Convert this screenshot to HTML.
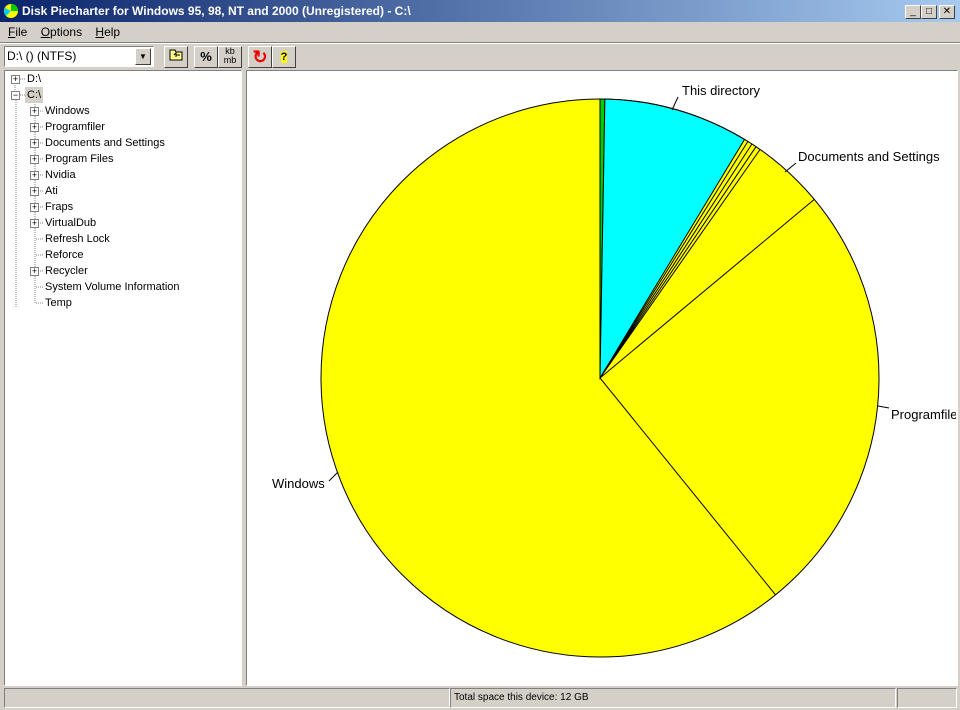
<!DOCTYPE html>
<html><head><style>
body{margin:0;width:960px;height:710px;background:#d4d0c8;font-family:"Liberation Sans",Tahoma,sans-serif;font-size:11px;position:relative;overflow:hidden}
.a{position:absolute}
.title{left:0;top:0;width:960px;height:22px;background:linear-gradient(to right,#0a246a,#a6caf0);color:#fff;font-weight:bold;font-size:12px;line-height:22px}
.wb{top:5px;width:14px;height:12px;background:#d4d0c8;border:1px solid;border-color:#fff #404040 #404040 #fff;font-size:10px;line-height:12px;text-align:center;color:#000}
.menu span{margin-right:10px}
.btn{top:46px;width:22px;height:20px;background:#d4d0c8;border:1px solid;border-color:#fff #404040 #404040 #fff;text-align:center;line-height:20px;font-weight:bold}
.sunk{border:1px solid;border-color:#808080 #fff #fff #808080}
.tree div.t{position:absolute;height:16px;line-height:16px;white-space:nowrap}
.tree div.pm{position:absolute;width:7px;height:7px;border:1px solid #808080;background:#fff;font-size:9px;line-height:7px;text-align:center;overflow:hidden}
</style></head><body>
<div class="a title"><svg class="a" style="left:3px;top:3px" width="16" height="16"><circle cx="8" cy="8" r="7" fill="#ff0"/><path d="M8 8L8 1A7 7 0 0 1 15 8Z" fill="#0c0"/><path d="M8 8L3 13A7 7 0 0 1 2 5Z" fill="#0cf"/></svg><span class="a" style="left:22px">Disk Piecharter for Windows 95, 98, NT and 2000 (Unregistered) - C:\</span></div>
<div class="a wb" style="left:905px">_</div><div class="a wb" style="left:921px">□</div><div class="a wb" style="left:939px;">✕</div>
<div class="a menu" style="left:8px;top:25px;font-size:12px"><span><u>F</u>ile</span> <span><u>O</u>ptions</span> <span><u>H</u>elp</span></div>
<div class="a" style="left:0;top:42px;width:960px;border-top:1px solid #808080;border-bottom:1px solid #fff"></div>
<div class="a sunk" style="left:4px;top:46px;width:146px;height:19px;background:#fff;font-size:12px;line-height:19px;padding-left:2px">D:\ () (NTFS)</div>
<div class="a btn" style="left:135px;top:48px;width:14px;height:15px;line-height:15px;font-size:8px">▼</div>
<div class="a btn" style="left:164px"><svg width="16" height="14"><path d="M2 3h5l1 2h6v8H2z" fill="#ff8" stroke="#000"/><path d="M6 8l2-2v4M8 8h4" stroke="#000" fill="none"/></svg></div>
<div class="a btn" style="left:194px;font-size:13px">%</div>
<div class="a btn" style="left:218px;font-size:9px;line-height:9px;font-weight:normal">kb<br>mb</div>
<div class="a btn" style="left:248px;color:#e00;font-size:18px">↻</div>
<div class="a btn" style="left:272px;color:#000;background:#d4d0c8"><span style="background:#ff0">?</span></div>
<div class="a sunk" style="left:4px;top:70px;width:236px;height:614px;background:#fff"></div>
<div class="a sunk" style="left:246px;top:70px;width:710px;height:614px;background:#fff"></div>
<div class="a tree" style="left:0;top:0">
<svg class="a" style="left:0;top:0" width="240" height="320"><g stroke="#808080" stroke-dasharray="1,1"><path d="M15 79v16M20 79h5M20 95h5M16 100v207M36 111h8M36 127h8M36 143h8M36 159h8M36 175h8M36 191h8M36 207h8M36 223h8M36 239h8M36 255h8M36 271h8M36 287h8M36 303h8"/><path d="M35 100v203"/></g></svg>
<div class="pm" style="left:11px;top:75px">+</div><div class="t" style="left:27px;top:71px">D:\</div>
<div class="pm" style="left:11px;top:91px">−</div><div class="t" style="left:25px;top:87px;background:#d4d0c8;padding:0 2px">C:\</div>
<div class="pm" style="left:30px;top:107px">+</div><div class="t" style="left:45px;top:103px">Windows</div>
<div class="pm" style="left:30px;top:123px">+</div><div class="t" style="left:45px;top:119px">Programfiler</div>
<div class="pm" style="left:30px;top:139px">+</div><div class="t" style="left:45px;top:135px">Documents and Settings</div>
<div class="pm" style="left:30px;top:155px">+</div><div class="t" style="left:45px;top:151px">Program Files</div>
<div class="pm" style="left:30px;top:171px">+</div><div class="t" style="left:45px;top:167px">Nvidia</div>
<div class="pm" style="left:30px;top:187px">+</div><div class="t" style="left:45px;top:183px">Ati</div>
<div class="pm" style="left:30px;top:203px">+</div><div class="t" style="left:45px;top:199px">Fraps</div>
<div class="pm" style="left:30px;top:219px">+</div><div class="t" style="left:45px;top:215px">VirtualDub</div>
<div class="t" style="left:45px;top:231px">Refresh Lock</div>
<div class="t" style="left:45px;top:247px">Reforce</div>
<div class="pm" style="left:30px;top:267px">+</div><div class="t" style="left:45px;top:263px">Recycler</div>
<div class="t" style="left:45px;top:279px">System Volume Information</div>
<div class="t" style="left:45px;top:295px">Temp</div>
</div>
<svg class="a" style="left:0;top:0" width="956" height="686"><g stroke="#000" stroke-width="1">
<circle cx="600" cy="378" r="279" fill="#ff0"/>
<path d="M600 378L600 99A279 279 0 0 1 604.9 99Z" fill="#0c0"/>
<path d="M600 378L604.9 99A279 279 0 0 1 744.5 139.5Z" fill="#0ff"/>
<path d="M600 378L747.9 141.4M600 378L752 143.9M600 378L756 146.7M600 378L760 149.5M600 378L814.3 199.4M600 378L775.5 594.8M600 378V99" fill="none"/>
<path d="M678 97L672 110M796 163L785 172M889 408L878 406M329 481L338 472" fill="none"/></g>
<g font-size="13" font-family="Liberation Sans,sans-serif"><text x="682" y="95">This directory</text><text x="798" y="161">Documents and Settings</text><text x="891" y="419">Programfiler</text><text x="272" y="488">Windows</text></g></svg>
<div class="a sunk" style="left:4px;top:688px;width:444px;height:18px"></div>
<div class="a sunk" style="left:450px;top:688px;height:18px;line-height:18px;padding-left:3px;width:441px;font-size:10px">Total space this device: 12 GB</div>
<div class="a sunk" style="left:897px;top:688px;width:58px;height:18px"></div>
</body></html>
